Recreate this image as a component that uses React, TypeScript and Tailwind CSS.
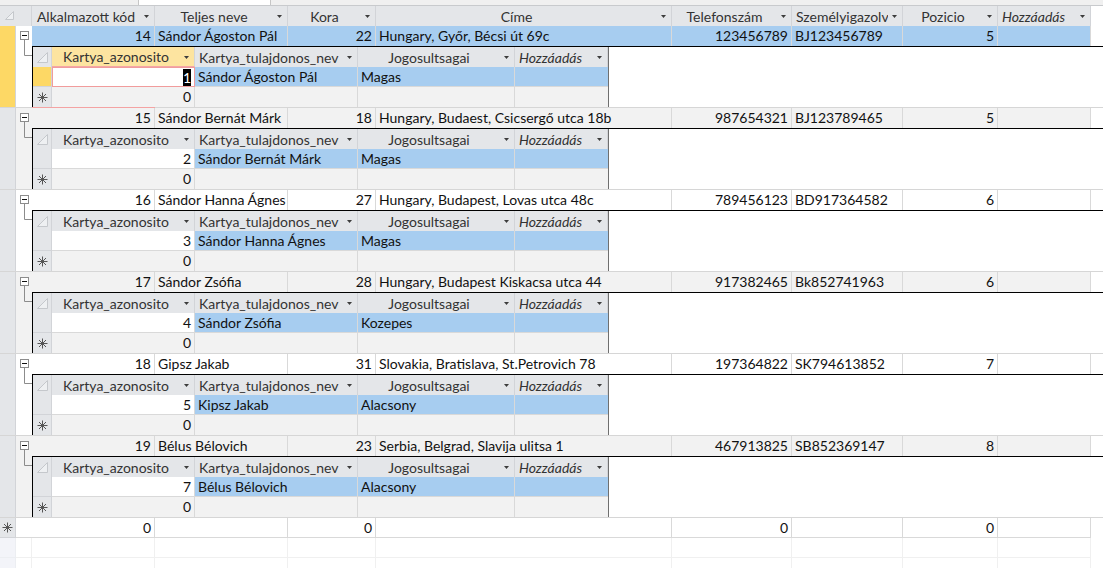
import React from "react";

const cols = [
  { w: "w-[123px]", label: "Alkalmazott kód", num: true },
  { w: "w-[133px]", label: "Teljes neve" },
  { w: "w-[88px]", label: "Kora", num: true },
  { w: "w-[296px]", label: "Címe" },
  { w: "w-[120px]", label: "Telefonszám", num: true },
  { w: "w-[111px]", label: "Személyigazolvány", clip: true },
  { w: "w-[95px]", label: "Pozicio", num: true },
  { w: "w-[93px]", label: "Hozzáadás", italic: true },
];

const subCols = [
  { w: "w-[143px]", label: "Kartya_azonosito" },
  { w: "w-[163px]", label: "Kartya_tulajdonos_nev", clip: true },
  { w: "w-[157px]", label: "Jogosultsagai" },
  { w: "w-[93px]", label: "Hozzáadás", italic: true },
];

const employees = [
  { id: 14, name: "Sándor Ágoston Pál", age: 22, addr: "Hungary, Győr, Bécsi út 69c", tel: "123456789", doc: "BJ123456789", pos: 5, card: 1, owner: "Sándor Ágoston Pál", level: "Magas" },
  { id: 15, name: "Sándor Bernát Márk", age: 18, addr: "Hungary, Budaest, Csicsergő utca 18b", tel: "987654321", doc: "BJ123789465", pos: 5, card: 2, owner: "Sándor Bernát Márk", level: "Magas" },
  { id: 16, name: "Sándor Hanna Ágnes", age: 27, addr: "Hungary, Budapest, Lovas utca 48c", tel: "789456123", doc: "BD917364582", pos: 6, card: 3, owner: "Sándor Hanna Ágnes", level: "Magas" },
  { id: 17, name: "Sándor Zsófia", age: 28, addr: "Hungary, Budapest Kiskacsa utca 44", tel: "917382465", doc: "Bk852741963", pos: 6, card: 4, owner: "Sándor Zsófia", level: "Kozepes" },
  { id: 18, name: "Gipsz Jakab", age: 31, addr: "Slovakia, Bratislava, St.Petrovich 78", tel: "197364822", doc: "SK794613852", pos: 7, card: 5, owner: "Kipsz Jakab", level: "Alacsony" },
  { id: 19, name: "Bélus Bélovich", age: 23, addr: "Serbia, Belgrad, Slavija ulitsa 1", tel: "467913825", doc: "SB852369147", pos: 8, card: 7, owner: "Bélus Bélovich", level: "Alacsony" },
];

function Arrow() {
  return (
    <svg width="14" height="20" viewBox="0 0 14 20" className="flex-none">
      <polygon points="4,9 9,9 6.5,12" fill="#3c3c3c" />
    </svg>
  );
}

function Corner({ size }: { size: number }) {
  return (
    <svg width={size} height={size} viewBox={`0 0 ${size} ${size}`}>
      <polygon points={`0.5,${size - 0.5} ${size - 0.5},0.5 ${size - 0.5},${size - 0.5}`} fill="#eef0f2" stroke="#c5c8cc" strokeWidth="1" />
    </svg>
  );
}

function Star() {
  return (
    <svg width="11" height="11" viewBox="0 0 11 11">
      <g stroke="#555" strokeWidth="1">
        <line x1="5.5" y1="0.5" x2="5.5" y2="10.5" />
        <line x1="0.5" y1="5.5" x2="10.5" y2="5.5" />
        <line x1="2" y1="2" x2="9" y2="9" />
        <line x1="9" y1="2" x2="2" y2="9" />
      </g>
    </svg>
  );
}

function HeadCell({ w, label, italic, clip, active }: { w: string; label: string; italic?: boolean; clip?: boolean; active?: boolean }) {
  return (
    <div className={`${w} flex-none h-full flex items-center border-r border-[#d2d4d8] ${active ? "bg-[#fde4a0] border-b border-b-[#f3a6a6]" : ""}`}>
      <div className={`flex-1 min-w-0 overflow-hidden whitespace-nowrap text-[#333] ${italic || clip ? "pl-[4px] text-left" : "text-center"} ${italic ? "italic" : ""}`}>
        {label}
      </div>
      <Arrow />
    </div>
  );
}

function Cell({ w, children, num, bg, extra }: { w: string; children?: React.ReactNode; num?: boolean; bg: string; extra?: string }) {
  return (
    <div className={`${w} flex-none h-full px-[3px] leading-[19px] whitespace-nowrap overflow-hidden border-r border-b border-[#d9d9d9] ${num ? "text-right" : "text-left"} ${bg} ${extra ?? ""}`}>
      {children}
    </div>
  );
}

function ExpandTree() {
  return (
    <svg width="16" height="40" viewBox="0 0 16 40">
      <path d="M8.5 13.5 V29.5 H16" fill="none" stroke="#8c8c8c" />
      <rect x="4.5" y="5.5" width="8" height="8" fill="#fff" stroke="#8c8c8c" />
      <line x1="6" y1="9.5" x2="11" y2="9.5" stroke="#111" />
    </svg>
  );
}

function Group({ e, i }: { e: (typeof employees)[number]; i: number }) {
  const selected = i === 0;
  const alt = i % 2 === 1 ? "bg-[#f2f2f2]" : "bg-white";
  const rowBg = selected ? "bg-[#a7cdf0]" : alt;
  const values = [e.id, e.name, e.age, e.addr, e.tel, e.doc, e.pos, ""];
  return (
    <>
      <div className="flex h-[81px]">
        <div className={`w-[16px] flex-none border-r border-[#d2d4d8] ${selected ? "bg-[#fdd865]" : "bg-[#e4e6e9]"}`} />
        <div className={`w-[16px] flex-none ${alt}`}>
          <ExpandTree />
        </div>
        <div className="flex-1 flex flex-col">
          <div className="flex h-[20px]">
            {cols.map((c, k) => (
              <Cell key={k} w={c.w} num={c.num} bg={rowBg} extra="border-b-0">
                {values[k]}
              </Cell>
            ))}
            <div className="flex-1 bg-white" />
          </div>
          <div className="h-px bg-black" />
          <div className="flex h-[60px]">
            <div className="w-[577px] flex-none flex flex-col border-l border-black border-r border-r-[#6f6f6f]">
              <div className="flex h-[20px] bg-[#e4e6e9]">
                <div className="w-[19px] flex-none h-full flex items-center justify-center border-r border-[#d2d4d8]">
                  <Corner size={11} />
                </div>
                {subCols.map((c, k) => (
                  <HeadCell key={k} {...c} active={selected && k === 0} />
                ))}
              </div>
              <div className="flex h-[20px]">
                <div className={`w-[19px] flex-none border-r border-b border-[#d2d4d8] ${selected ? "bg-[#fdd865]" : "bg-[#e4e6e9]"}`} />
                <Cell w="w-[143px]" num bg="bg-white" extra={selected ? "border border-[#f19c9c]" : ""}>
                  {selected ? <span className="bg-black text-white">{e.card}</span> : e.card}
                </Cell>
                <Cell w="w-[163px]" bg="bg-[#a7cdf0]">{e.owner}</Cell>
                <Cell w="w-[157px]" bg="bg-[#a7cdf0]">{e.level}</Cell>
                <Cell w="w-[93px]" bg="bg-[#a7cdf0]" extra="border-r-0" />
              </div>
              <div className="flex h-[20px]">
                <div className="w-[19px] flex-none flex items-center justify-center border-r border-[#d2d4d8] bg-[#e4e6e9]">
                  <Star />
                </div>
                <Cell w="w-[143px]" num bg="bg-[#f2f2f2]" extra="border-b-0">0</Cell>
                <Cell w="w-[163px]" bg="bg-[#f2f2f2]" extra="border-b-0" />
                <Cell w="w-[157px]" bg="bg-[#f2f2f2]" extra="border-b-0" />
                <Cell w="w-[93px]" bg="bg-[#f2f2f2]" extra="border-b-0 border-r-0" />
              </div>
            </div>
            <div className="flex-1 bg-white" />
          </div>
        </div>
      </div>
      <div className="flex h-px bg-[#d6d6d6]">
        <div className="w-[32px] flex-none" />
        {selected && <div className="w-[123px] flex-none bg-[#f4a3a3]" />}
      </div>
    </>
  );
}

export default function App() {
  const newRow = ["0", "", "0", "", "0", "", "0", ""];
  return (
    <div className="w-[1103px] h-[568px] overflow-hidden bg-white text-[14px] text-[#111] font-['Lato','Liberation_Sans',sans-serif]">
      <div className="flex h-[5px] bg-[#f0f0f0]">
        <div className="w-[138px] flex-none" />
        <div className="w-[133px] flex-none bg-white border-l border-r border-[#c6c6c6]" />
      </div>
      <div className="flex h-[21px] border-t border-[#c8cacd]">
        <div className="w-[32px] flex-none h-full bg-[#e4e6e9] border-r border-[#d2d4d8] pl-[5px] pt-[5px]">
          <Corner size={9} />
        </div>
        <div className="flex h-full bg-[#e4e6e9]">
          {cols.map((c, k) => (
            <HeadCell key={k} {...c} />
          ))}
        </div>
        <div className="flex-1 bg-white" />
      </div>
      {employees.map((e, i) => (
        <Group key={e.id} e={e} i={i} />
      ))}
      <div className="flex h-[20px]">
        <div className="w-[16px] flex-none flex items-center justify-center bg-[#e4e6e9] border-r border-b border-[#d2d4d8]">
          <Star />
        </div>
        <div className="w-[16px] flex-none border-b border-[#d9d9d9]" />
        {cols.map((c, k) => (
          <Cell key={k} w={c.w} num={c.num} bg="bg-white">
            {newRow[k]}
          </Cell>
        ))}
        <div className="flex-1" />
      </div>
      {[0, 1].map((r) => (
        <div key={r} className="flex h-[20px]">
          <div className="w-[16px] flex-none bg-[#f3f4f9] border-r border-b border-[#eceef2]" />
          <div className="w-[16px] flex-none border-r border-b border-[#f0f0f0]" />
          {cols.map((c, k) => (
            <div key={k} className={`${c.w} flex-none border-r border-b border-[#f0f0f0]`} />
          ))}
        </div>
      ))}
    </div>
  );
}
